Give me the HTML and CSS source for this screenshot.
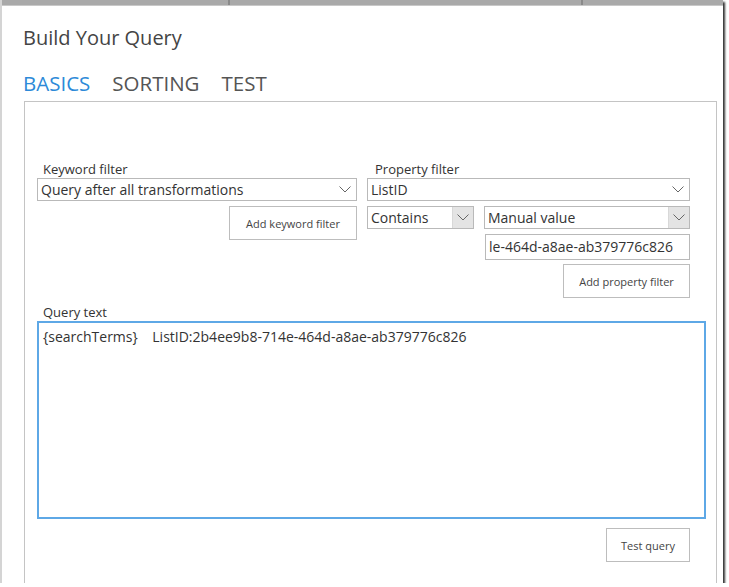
FILE: index.html
```html
<!DOCTYPE html>
<html>
<head>
<meta charset="utf-8">
<link rel="stylesheet" href="styles.css">
</head>
<body>
<div class="window">
  <div class="topbar">
    <div class="seg seg1"></div>
    <div class="seg seg2"></div>
    <div class="seg seg3"></div>
  </div>
  <div class="dialog">
    <h1 class="title">Build Your Query</h1>
    <nav class="tabs">
      <span class="tab active">BASICS</span>
      <span class="tab">SORTING</span>
      <span class="tab">TEST</span>
    </nav>
    <div class="panel">
      <div class="filters">
        <div class="col col-left">
          <div class="label">Keyword filter</div>
          <div class="select">
            <span class="sel-text">Query after all transformations</span>
            <span class="chev"><svg width="12" height="7" viewBox="0 0 12 7"><path d="M0.5 0.5 L6 6 L11.5 0.5" fill="none" stroke="#666" stroke-width="1"/></svg></span>
          </div>
          <div class="btn-row">
            <button class="btn btn-kw">Add keyword filter</button>
          </div>
        </div>
        <div class="col col-right">
          <div class="label label-prop">Property filter</div>
          <div class="select">
            <span class="sel-text">ListID</span>
            <span class="chev"><svg width="12" height="7" viewBox="0 0 12 7"><path d="M0.5 0.5 L6 6 L11.5 0.5" fill="none" stroke="#666" stroke-width="1"/></svg></span>
          </div>
          <div class="select-row">
            <div class="select select-sm select-contains">
              <span class="sel-text">Contains</span>
              <span class="chev chev-box"><svg width="12" height="7" viewBox="0 0 12 7"><path d="M0.5 0.5 L6 6 L11.5 0.5" fill="none" stroke="#666" stroke-width="1"/></svg></span>
            </div>
            <div class="select select-sm select-manual">
              <span class="sel-text">Manual value</span>
              <span class="chev chev-box"><svg width="12" height="7" viewBox="0 0 12 7"><path d="M0.5 0.5 L6 6 L11.5 0.5" fill="none" stroke="#666" stroke-width="1"/></svg></span>
            </div>
          </div>
          <div class="input-row">
            <div class="input">le-464d-a8ae-ab379776c826</div>
          </div>
          <div class="btn-row">
            <button class="btn btn-prop">Add property filter</button>
          </div>
        </div>
      </div>
      <div class="query">
        <div class="label">Query text</div>
        <div class="textarea">{searchTerms}&nbsp;&nbsp;&nbsp; ListID:2b4ee9b8-714e-464d-a8ae-ab379776c826</div>
        <div class="btn-row btn-row-test">
          <button class="btn btn-test">Test query</button>
        </div>
      </div>
    </div>
  </div>
</div>
</body>
</html>
```

FILE: styles.css
```css
* { box-sizing: border-box; }
html, body { margin: 0; padding: 0; background: #fff; }
body { font-family: "Open Sans", "Noto Sans", sans-serif; color: #333; }

.window {
  width: 723px;
  height: 583px;
  border-left: 2px solid #d4d4d4;
  box-shadow: 2px 2px 2px #333;
  overflow: hidden;
  background: #fff;
}

.topbar {
  display: flex;
  height: 6px;
  background: #a9a9a9;
  border-bottom: 1px solid #c8c8c8;
}
.seg { height: 100%; }
.seg1 { width: 228px; border-right: 2px solid #8a8a8a; }
.seg2 { width: 353px; border-right: 2px solid #8a8a8a; }
.seg3 { flex: 1; }

.dialog { padding: 0 0 0 21px; }

.title {
  margin: 19px 0 0 0;
  font-size: 20px;
  font-weight: 400;
  line-height: 26px;
  color: #444;
}

.tabs {
  display: flex;
  gap: 22px;
  margin-top: 19px;
  font-size: 20.5px;
  line-height: 26px;
  color: #555;
}
.tab.active { color: #2d8ad8; }

.panel {
  margin-top: 5px;
  margin-left: 1px;
  width: 693px;
  height: 490px;
  border: 1px solid #c4c4c4;
  border-bottom: none;
  padding: 58px 10px 0 12px;
}

.filters { display: flex; gap: 10px; }
.col { display: flex; flex-direction: column; }
.col-left { width: 320px; }
.col-right { width: 323px; }

.label {
  font-size: 13px;
  line-height: 18px;
  color: #333;
  padding-left: 6px;
}
.label-prop { padding-left: 8px; }

.select {
  display: flex;
  align-items: center;
  height: 23px;
  border: 1px solid #b9b9b9;
  background: #fff;
  font-size: 14px;
  color: #333;
}
.sel-text { flex: 1; padding-left: 3px; white-space: nowrap; overflow: hidden; }
.chev { width: 22px; height: 100%; display: flex; align-items: center; justify-content: center; }
.chev-box { background: #e4e4e4; border-left: 1px solid #d8d8d8; width: 21px; }

.select-row { display: flex; gap: 10px; margin-top: 5px; }
.select-contains { width: 107px; }
.select-manual { flex: 1; }

.input-row { display: flex; justify-content: flex-end; margin-top: 5px; }
.input {
  width: 205px;
  height: 26px;
  border: 1px solid #b9b9b9;
  font-size: 14px;
  line-height: 24px;
  padding-left: 3px;
  white-space: nowrap;
  overflow: hidden;
  color: #333;
}

.btn-row { display: flex; justify-content: flex-end; margin-top: 4px; }
.btn {
  font-family: "Open Sans", "Noto Sans", sans-serif;
  font-size: 11px;
  color: #444;
  background: #fff;
  border: 1px solid #bdbdbd;
  height: 34px;
  padding: 0;
}
.btn-kw { width: 128px; margin-top: 1px; }
.btn-prop { width: 127px; }

.query { margin-top: 5px; width: 669px; }
.textarea {
  margin-top: 0;
  height: 198px;
  border: 2px solid #5ea8e6;
  font-size: 14px;
  line-height: 18px;
  padding: 5px 4px;
  color: #333;
  white-space: pre;
}
.btn-row-test { margin-top: 9px; padding-right: 16px; }
.btn-test { width: 84px; }
```
